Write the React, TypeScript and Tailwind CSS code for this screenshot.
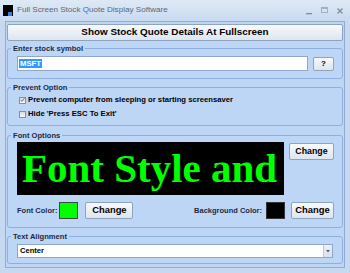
import { ReactNode } from 'react';

// Windows 7 basic style window, client area in light blue
function Group({ title, className, children }: { title: string; className: string; children: ReactNode }) {
  return (
    <fieldset className={`mx-[1px] rounded-[3px] border border-[#8db0df] ${className}`}>
      <legend className="ml-[3px] px-[2px] text-[7.6px] leading-[9px] font-bold text-[#1b2b45]">{title}</legend>
      {children}
    </fieldset>
  );
}

function Btn({ children, className }: { children: ReactNode; className: string }) {
  return (
    <div
      className={`flex items-center justify-center rounded-[2px] border border-[#8fa3bd] bg-gradient-to-b from-[#f8fafc] to-[#dde5ef] font-bold text-black ${className}`}
    >
      {children}
    </div>
  );
}

function Check({ checked, label }: { checked: boolean; label: string }) {
  return (
    <div className="flex h-[14px] items-center pl-[11px]">
      <div className="flex h-[7px] w-[7px] items-center justify-center border border-[#8e8f8f] bg-gradient-to-b from-[#dcdcdc] to-[#f7f7f7]">
        {checked && (
          <svg width="6" height="6" viewBox="0 0 6 6">
            <path d="M0.8 3 L2.3 4.6 L5.2 1" stroke="#4a5a70" strokeWidth="1" fill="none" />
          </svg>
        )}
      </div>
      <span className="ml-[2px] text-[7.7px] font-bold text-black">{label}</span>
    </div>
  );
}

export default function App() {
  return (
    <div className="flex h-[273px] w-[350px] flex-col overflow-hidden bg-[#c6d9f0] font-['Liberation_Sans',Arial,sans-serif]">
      {/* Title bar */}
      <div className="flex h-[21px] shrink-0 items-center bg-gradient-to-b from-[#dfe9f6] to-[#c8daf0] pl-[3px] pr-[7px]">
        <div className="relative h-[11px] w-[10px] bg-black">
          <div className="absolute bottom-[0px] right-[1px] h-[4px] w-[4px] bg-[#3b7fd9]" />
        </div>
        <span className="ml-[4px] text-[8.1px] text-[#5a6779]">Full Screen Stock Quote Display Software</span>
        <div className="ml-auto flex items-center gap-[9px] text-[#7c8da3]">
          <svg width="6" height="8" viewBox="0 0 6 8">
            <rect x="0" y="6" width="6" height="1.3" fill="#7c8da3" />
          </svg>
          <svg width="7" height="7" viewBox="0 0 7 7">
            <rect x="0.5" y="0.5" width="6" height="5" stroke="#a3b1c2" fill="none" />
            <rect x="0.5" y="0.5" width="6" height="1.5" fill="#a3b1c2" />
          </svg>
          <svg width="6" height="6" viewBox="0 0 6 6">
            <path d="M0.5 0.5 L5.5 5.5 M5.5 0.5 L0.5 5.5" stroke="#7c8da3" strokeWidth="1.3" />
          </svg>
        </div>
      </div>

      {/* Client area */}
      <div className="mx-[5px] mb-[5px] flex flex-1 flex-col border border-[#93acd0] bg-[#bed6f6]">
        <Btn className="mx-[1px] mt-[2px] h-[17px] border-[#8b9fb9] from-[#f0f4f9] to-[#d4dfec] text-[9.9px]">
          Show Stock Quote Details At Fullscreen
        </Btn>

        <Group title="Enter stock symbol" className="mt-[3px]">
          <div className="flex items-center pb-[7px] pl-[9px] pr-[8px] pt-[3px]">
            <div className="flex h-[15px] flex-1 items-center border border-[#8ea8cc] bg-white pl-[1px]">
              <span className="bg-[#3399ff] px-[1px] text-[7.7px] font-bold leading-[9px] text-white">MSFT</span>
            </div>
            <Btn className="ml-[5px] h-[14px] w-[21px] text-[8px]">?</Btn>
          </div>
        </Group>

        <Group title="Prevent Option" className="mt-[4px]">
          <div className="pb-[4px] pt-[1px]">
            <Check checked label="Prevent computer from sleeping or starting screensaver" />
            <Check checked={false} label="Hide 'Press ESC To Exit'" />
          </div>
        </Group>

        <Group title="Font Options" className="mt-[5px]">
          <div className="pb-[8px] pl-[9px] pr-[8px] pt-[2px]">
            <div className="flex items-start">
              <div className="flex h-[53px] w-[267px] items-center overflow-hidden whitespace-nowrap bg-black pl-[5px]">
                <span className="font-['Liberation_Serif','Times_New_Roman',serif] text-[41px] font-bold leading-none text-[#00ff00]">
                  Font Style and
                </span>
              </div>
              <Btn className="ml-[5px] mt-[1px] h-[17px] flex-1 text-[8.8px]">Change</Btn>
            </div>
            <div className="mt-[7px] flex h-[17px] items-center">
              <span className="text-[7.5px] font-bold text-[#1b2b45]">Font Color:</span>
              <div className="ml-[2px] h-[17px] w-[19px] border border-[#3d4a3d] bg-[#00ff00]" />
              <Btn className="ml-[7px] h-[17px] w-[48px] text-[9.4px]">Change</Btn>
              <span className="ml-auto text-[7.5px] font-bold text-[#1b2b45]">Background Color:</span>
              <div className="ml-[4px] h-[17px] w-[19px] border border-[#333] bg-black" />
              <Btn className="ml-[6px] h-[17px] w-[43px] text-[9.4px]">Change</Btn>
            </div>
          </div>
        </Group>

        <Group title="Text Alignment" className="mt-[4px]">
          <div className="pb-[5px] pl-[9px] pr-[9px] pt-[3px]">
            <div className="flex h-[14px] items-center border border-[#8ea8cc] bg-white">
              <span className="pl-[2px] text-[7.6px] font-bold text-black">Center</span>
              <div className="ml-auto flex h-full w-[9px] items-center justify-center border-l border-[#b9c8da] bg-gradient-to-b from-[#eef2f7] to-[#d6e0ec]">
                <svg width="4" height="3" viewBox="0 0 4 3">
                  <path d="M0 0 L4 0 L2 2.5 Z" fill="#4d5d72" />
                </svg>
              </div>
            </div>
          </div>
        </Group>
      </div>
    </div>
  );
}
